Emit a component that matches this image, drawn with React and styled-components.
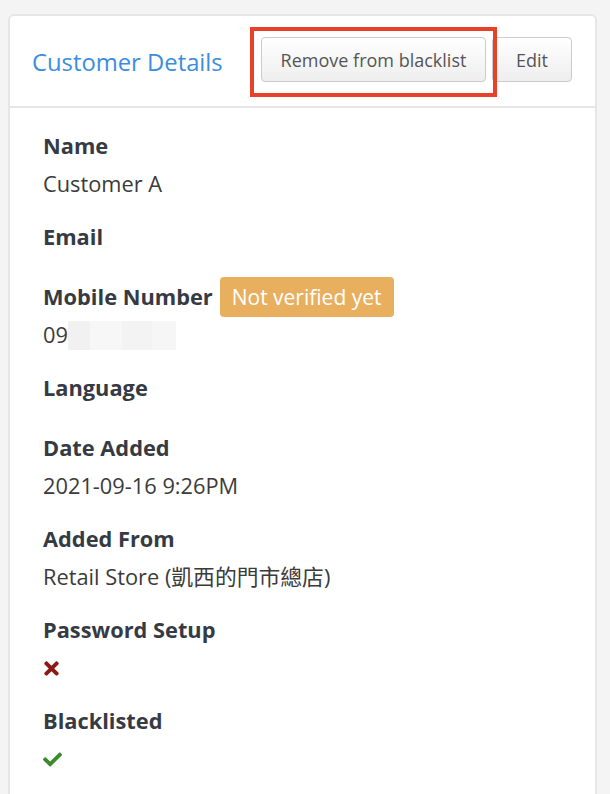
import styled, { createGlobalStyle } from "styled-components";
import { FaTimes, FaCheck } from "react-icons/fa";

const GlobalStyle = createGlobalStyle`
    html, body {
        margin: 0;
        background: #f4f4f4;
        font-family: "Open Sans", "Noto Sans CJK TC", sans-serif;
    }
`;

const Page = styled.div`
    padding: 14px 13px 0 8px;
    height: 794px;
    box-sizing: border-box;
    overflow: hidden;
`;

const Card = styled.div`
    background: #fff;
    border: 2px solid #e6e6e6;
    border-radius: 6px;
    min-height: 820px;
`;

const Header = styled.div`
    display: flex;
    align-items: center;
    justify-content: space-between;
    height: 90px;
    padding: 0 23px 0 22px;
    border-bottom: 2px solid #e6e6e6;
`;

const Title = styled.h3`
    margin: 2px 0 0;
    font-size: 23.8px;
    font-weight: 400;
    color: #3b8de0;
`;

const Actions = styled.div`
    display: flex;
    gap: 6px;
    margin-top: -3px;
`;

const Highlight = styled.div`
    position: relative;
`;

const Marker = styled.div`
    position: absolute;
    top: -10px;
    left: -11px;
    right: -11px;
    bottom: -15px;
    border: 4px solid #e8412a;
    pointer-events: none;
`;

const Button = styled.button`
    height: 45px;
    width: ${(p) => p.$w}px;
    padding: 0;
    font-family: inherit;
    font-size: 18px;
    color: #555;
    background: linear-gradient(#ffffff, #eeeeee);
    border: 1px solid #cbcbcb;
    border-radius: 4px;
`;

const Body = styled.div`
    padding: 23px 33px 30px;
    display: flex;
    flex-direction: column;
    gap: 23px;
`;

const Field = styled.div`
    display: flex;
    flex-direction: column;
    gap: 8px;
`;

const LabelRow = styled.div`
    display: flex;
    align-items: center;
    gap: 7px;
    height: 30px;
`;

const Label = styled.span`
    font-size: 21.8px;
    font-weight: 700;
    line-height: 30px;
    color: #363a43;
`;

const Badge = styled.span`
    margin: -5px 0;
    height: 40px;
    padding: 0 12px;
    display: flex;
    align-items: center;
    background: #e8af5f;
    color: #fff;
    font-size: 21px;
    border-radius: 4px;
`;

const Value = styled.div`
    display: flex;
    align-items: center;
    height: 30px;
    font-size: 21.8px;
    line-height: 30px;
    color: #3b3b3b;

    &:empty {
        height: 0;
        margin-top: -1px;
    }

    svg.cross {
        margin-left: -2px;
    }
`;

const Redacted = styled.span`
    display: inline-block;
    width: 108px;
    height: 29px;
    background: linear-gradient(90deg, #f1f1f1 0 20%, #f7f7f7 20% 50%, #f3f3f3 50% 78%, #f6f6f6 78%);
`;

const fields = [
    { label: "Name", value: "Customer A" },
    { label: "Email" },
    { label: "Mobile Number", badge: "Not verified yet", value: "09", redacted: true },
    { label: "Language" },
    { label: "Date Added", value: "2021-09-16 9:26PM" },
    { label: "Added From", value: "Retail Store (凱西的門市總店)" },
    { label: "Password Setup", icon: <FaTimes className="cross" color="#8c1a14" size={21} /> },
    { label: "Blacklisted", icon: <FaCheck color="#3a8c2a" size={19} /> },
];

export default function App() {
    return (
        <Page>
            <GlobalStyle />
            <Card>
                <Header>
                    <Title>Customer Details</Title>
                    <Actions>
                        <Highlight>
                            <Button $w={225}>Remove from blacklist</Button>
                            <Marker />
                        </Highlight>
                        <Button $w={80}>Edit</Button>
                    </Actions>
                </Header>
                <Body>
                    {fields.map((f) => (
                        <Field key={f.label}>
                            <LabelRow>
                                <Label>{f.label}</Label>
                                {f.badge && <Badge>{f.badge}</Badge>}
                            </LabelRow>
                            <Value>
                                {f.value}
                                {f.redacted && <Redacted />}
                                {f.icon}
                            </Value>
                        </Field>
                    ))}
                </Body>
            </Card>
        </Page>
    );
}
